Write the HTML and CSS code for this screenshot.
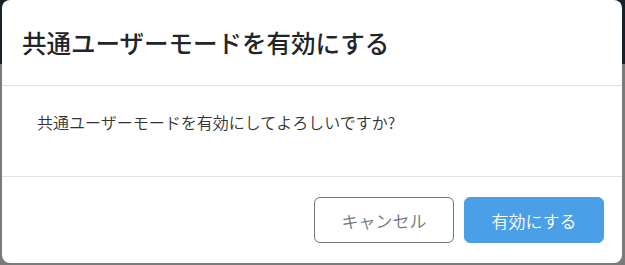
FILE: index.html
```html
<!DOCTYPE html>
<html lang="ja">
<head>
<meta charset="utf-8">
<title>共通ユーザーモード</title>
<link rel="stylesheet" href="styles.css">
</head>
<body>
<div class="backdrop">
  <div class="modal">
    <div class="modal-header">
      <h1 class="modal-title">共通ユーザーモードを有効にする</h1>
    </div>
    <div class="modal-body">
      <p class="message">共通ユーザーモードを有効にしてよろしいですか?</p>
    </div>
    <div class="modal-footer">
      <button class="btn btn-outline">キャンセル</button>
      <button class="btn btn-primary">有効にする</button>
    </div>
  </div>
</div>
</body>
</html>
```
FILE: styles.css
```css
* { box-sizing: border-box; }
html, body {
  margin: 0;
  padding: 0;
  width: 625px;
  height: 265px;
  overflow: hidden;
}
body {
  font-family: "Noto Sans CJK JP", "Noto Sans", sans-serif;
  background: linear-gradient(to bottom, #17212b 0, #17212b 64px, #7b7b7b 64px, #7b7b7b 100%);
}
.backdrop {
  padding: 0 3px 2px 2px;
  height: 265px;
}
.modal {
  width: 620px;
  height: 263px;
  background: #ffffff;
  border-radius: 8px;
  display: flex;
  flex-direction: column;
  overflow: hidden;
}
.modal-header {
  height: 86px;
  padding: 0 20px;
  display: flex;
  align-items: center;
  border-bottom: 1px solid #dee2e6;
}
.modal-title {
  margin: 0;
  font-size: 24.5px;
  font-weight: 500;
  color: #212529;
  line-height: 1.2;
}
.modal-body {
  height: 91px;
  padding: 24px 35px 0;
  border-bottom: 1px solid #dee2e6;
}
.message {
  margin: 0;
  font-size: 16px;
  font-weight: 350;
  line-height: 24px;
  color: #333333;
}
.modal-footer {
  flex: 1;
  display: flex;
  align-items: center;
  justify-content: flex-end;
  gap: 10px;
  padding: 0 18px 0 0;
}
.btn {
  width: 140px;
  height: 46px;
  border-radius: 6px;
  font-family: inherit;
  font-size: 17px;
  font-weight: 350;
  line-height: 1;
  padding: 0;
  cursor: pointer;
}
.btn-outline {
  background: #ffffff;
  border: 1px solid #6c757d;
  color: #6c757d;
}
.btn-primary {
  background: #4a9fe6;
  border: 1px solid #4a9fe6;
  color: #ffffff;
}
```
